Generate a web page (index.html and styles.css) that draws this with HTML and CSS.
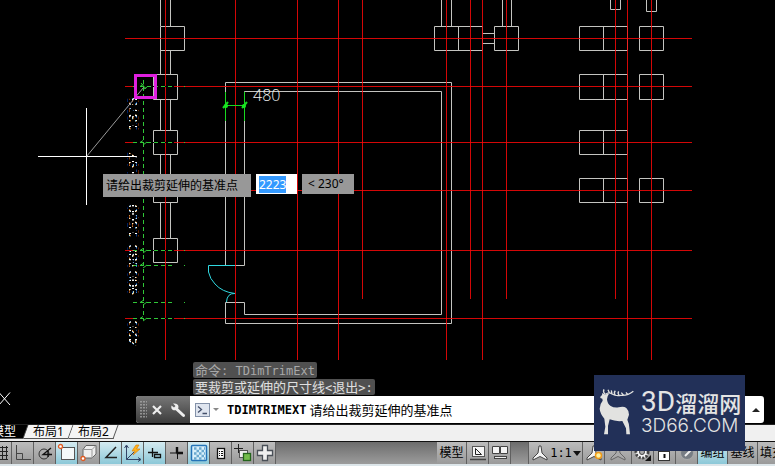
FILE: index.html
```
<!DOCTYPE html>
<html lang="zh-CN">
<head>
<meta charset="utf-8">
<title>TDimTrimExt</title>
<link rel="stylesheet" href="styles.css">
</head>
<body>
<main class="canvas">
  <svg class="drawing" viewBox="0 0 775 424" preserveAspectRatio="xMinYMin slice" role="img" aria-label="平面图">
    <defs>
      <pattern id="dash" width="6" height="6" patternUnits="userSpaceOnUse">
        <rect class="dash-on" width="4" height="2"/>
        <rect class="dash-on" x="2" y="3" width="4" height="2"/>
      </pattern>
    </defs>
    <!-- walls and columns -->
    <g class="wall">
      <path d="M160.500 0V26M170.500 0V26M170.500 50V74M160.500 50V74M160.500 99V130M170.500 99V130M160.500 154V178M170.500 154V178M160.500 202V238M170.500 202V238"/>
      <path d="M160.500 26.500h24v24h-24zM153.500 74.500h24v25h-24zM153.500 130.500h24v24h-24zM153.500 178.500h24v24h-24zM153.500 238.500h24v24h-24z"/>
      <path d="M235 265.500H244.500V91.500H441.500V314.500H244.500V302.500H225.500V323.500H451.500V82.500H225.500V265.500"/>
      <path d="M441.500 0V26M451.500 0V26M502.500 0V26M511.500 0V26M482 33.500H494M482 43.500H494"/>
      <path d="M434.500 26.500h48v24h-48zM458.500 26.500v24M494.500 26.500h24v24h-24z"/>
      <path d="M610.500 0V9.500h10V0M646.500 0V11.500h10V0"/>
      <path d="M579.500 26.500h48v24h-48zM603.500 26.500v24M639.500 26.500h24v24h-24z"/>
      <path d="M579.500 74.500h48v25h-48zM603.500 74.500v25M639.500 74.500h24v25h-24z"/>
      <path d="M579.500 130.500h48v24h-48zM603.500 130.500v24"/>
      <path d="M579.500 178.500h48v24h-48zM603.500 178.500v24M639.500 178.500h24v24h-24z"/>
    </g>
    <!-- axis grid -->
    <path class="axis" d="M125 38.500H692M125 86.500H692M125 142.500H692M125 190.500H692M125 250.500H692M125 318.500H692M165.500 0V360M235.500 0V360M297.500 0V360M338.500 0V360M362.500 0V299M446.500 0V360M470.500 0V299M482.500 0V360M506.500 0V299M615.500 0V299M627.500 0V360M651.500 0V360"/>
    <!-- door -->
    <path class="door" d="M235 265.500H208.500V272Q210 279 215 284Q222 292 235 293.500Q227 293 226.500 302"/>
    <!-- room dimension -->
    <g class="dim">
      <path d="M225.500 92V121M244.500 92V121M226 105.500H244"/>
      <path class="tick" d="M223 108l5-6M242 108l5-6"/>
      <circle cx="226" cy="106" r="2"/><circle cx="244" cy="106" r="2"/>
    </g>
    <text class="dim-text" x="253" y="101">480</text>
    <!-- selected dimension chain -->
    <path class="clear" d="M133 86.500H174M133 142.500H174M133 250.500H174M133 318.500H174"/>
    <path class="chain" d="M133 86.500H174M133 142.500H174M133 250.500H174M133 265.500H174M133 302.500H174M133 318.500H174M143.500 80V320"/>
    <path class="chain-dot" d="M184 86.500h1M184 142.500h1M184 250.500h1M184 265.500h1M184 302.500h1M184 318.500h1"/>
    <path class="chain-tick" d="M140 86.500l4-3M144 89l3-2M141 83l5 6M140 142.500l3-2M143 145l4-3M140 250.500l3-2M143 253l4-3M140 265.500l3-2M143 268l4-3M140 302.500l3-2M143 305l4-3M140 318.500l3-2M143 321l4-3"/>
    <g class="chain-text">
      <text transform="translate(138 114) rotate(-90)">1375</text>
      <text transform="translate(138 168) rotate(-90)">1197</text>
      <text transform="translate(138 221) rotate(-90)">1500</text>
      <text transform="translate(138 257) rotate(-90)">380</text>
      <text transform="translate(138 283) rotate(-90)">900</text>
      <text transform="translate(138 333) rotate(-90)">420</text>
    </g>
    <!-- snap marker and cursor -->
    <path class="rubber" d="M86.500 156.500L143.500 87.500"/>
    <rect class="snap" x="135.500" y="75.500" width="20" height="22"/>
    <path class="cursor" d="M38 156.500H136M86.500 108V205"/>
    <path class="ucs" d="M-1 392.500L10 405M10 392.500L-1 405"/>
  </svg>

  <div class="dyn">
    <label class="dyn-prompt" for="dist">请给出裁剪延伸的基准点</label>
    <input class="dyn-input" id="dist" type="text" value="2223">
    <output class="dyn-angle">&lt; 230°</output>
  </div>

  <section class="cmd">
    <p class="cmd-log old">命令<span class="mono">: TDimTrimExt</span></p>
    <p class="cmd-log">要裁剪或延伸的尺寸线<span class="mono">&lt;</span>退出<span class="mono">&gt;:</span></p>
    <div class="cmd-bar">
      <div class="cmd-grip">
        <svg width="7" height="18" viewBox="0 0 7 18"><path d="M1 0V18M4 0V18M7 0V18" stroke="#aaa" stroke-width="1.500" stroke-dasharray="1.500 1.500"/></svg>
        <button class="cmd-tool" aria-label="关闭"><svg width="10" height="10" viewBox="0 0 10 10"><path d="M1 1L9 9M9 1L1 9" stroke="#eee" stroke-width="2.200"/></svg></button>
        <button class="cmd-tool" aria-label="自定义"><svg width="16" height="16" viewBox="0 0 16 16"><path d="M6 6.500L13.500 13.500" stroke="#eee" stroke-width="3" stroke-linecap="round"/><path d="M3 1.500L5.500 4L4 5.500L1.500 3.500Q.500 7 3.500 8.200Q8 9 8.500 5Q8.500 1 3 1.500z" fill="#eee"/></svg></button>
      </div>
      <button class="cmd-recent" aria-label="最近使用的命令">
        <svg width="24" height="14" viewBox="0 0 24 14"><rect x=".500" y=".500" width="14" height="13" fill="#dfe5ef" stroke="#8391a8"/><path d="M3 3.500L6.500 6.500L3 9.500M7.500 10.500H12" fill="none" stroke="#44506a" stroke-width="1.300"/><path d="M18 5h6l-3 3z" fill="#888"/></svg>
      </button>
      <label class="cmd-line" for="cmd"><b class="mono">TDIMTRIMEXT</b><span>请给出裁剪延伸的基准点</span></label>
      <input class="cmd-input" id="cmd" type="text">
      <button class="cmd-up" aria-label="历史记录"><svg width="8" height="4" viewBox="0 0 8 4"><path d="M0 4L4 0L8 4z" fill="#222"/></svg></button>
    </div>
  </section>
</main>

<nav class="tabs">
  <button class="tab current">模型</button>
  <button class="tab">布局1</button>
  <button class="tab">布局2</button>
</nav>

<footer class="status">
  <button class="st first" aria-label="栅格"><svg viewBox="0 0 20 20"><path d="M3.500 3V17M7.500 3V17M11.500 3V17M15.500 3V17M2 4.500H17M2 8.500H17M2 12.500H17M2 16.500H17" stroke="#222"/></svg></button>
  <button class="st" aria-label="正交"><svg viewBox="0 0 20 20"><path d="M3.500 2V16.500H18M3.500 10.500H9.500V16" stroke="#444"/></svg></button>
  <button class="st" aria-label="极轴"><svg viewBox="0 0 20 20"><circle cx="9" cy="11" r="5" stroke="#333"/><path d="M16 5L8 11.500H17M13 7V14" stroke="#111" stroke-width="1.300"/></svg></button>
  <button class="st on" aria-label="对象捕捉"><svg viewBox="0 0 20 20"><rect x="4.500" y="4.500" width="13" height="12" fill="#f4f8f9" stroke="#555"/><circle cx="3.500" cy="3.500" r="2" fill="#fff" stroke="#e05a20" stroke-width="1.300"/></svg></button>
  <button class="st" aria-label="三维对象捕捉"><svg viewBox="0 0 20 20"><path d="M4 6.500L7 2.500H17V11L13 15H4z" fill="#eee" stroke="#666"/><path d="M4 6.500H13V15M13 6.500L17 2.500" stroke="#999"/><circle cx="4" cy="15.500" r="2" fill="#fff" stroke="#e05a20" stroke-width="1.300"/></svg></button>
  <button class="st on" aria-label="对象追踪"><svg viewBox="0 0 20 20"><path d="M15 4L5 14.500H16" stroke="#222" stroke-width="1.500"/></svg></button>
  <button class="st on" aria-label="动态UCS"><svg viewBox="0 0 20 20"><path d="M3.500 3V16.500H17M3.500 16.500L11 9M1.500 5L3.500 2L5.500 5M15 14.500L18 16.500L15 18.500" stroke="#346"/><path d="M13 2L9 8H12L10 12L17 6H13.500L16 2z" fill="#ffb21c" stroke="#d87800" stroke-width=".600"/></svg></button>
  <button class="st on" aria-label="动态输入"><svg viewBox="0 0 20 20"><path d="M3 9.500H13M7.500 5V14M9.500 11.500H15.500V14.500H9.500z" stroke="#111" stroke-width="1.300"/></svg></button>
  <button class="st" aria-label="线宽"><svg viewBox="0 0 20 20"><path d="M3 10H10" stroke="#111"/><path d="M9.500 10H16M10 4V10" stroke="#111" stroke-width="2.400"/><path d="M10.500 10V16" stroke="#111"/></svg></button>
  <button class="st on" aria-label="透明度"><svg viewBox="0 0 20 20"><rect x="2.500" y="2.500" width="15" height="15" rx="1" fill="#d9f0fb" stroke="#2474b8" stroke-width="1.500"/><path d="M5 5.500H16M7.500 8H16M5 10.500H16M7.500 13H16M5 15.500H16" stroke="#6ba9cf" stroke-width="2.500" stroke-dasharray="2.500 2.500"/></svg></button>
  <button class="st" aria-label="快捷特性"><svg viewBox="0 0 20 20"><rect x="6.500" y="5.500" width="7" height="10" fill="#fff" stroke="#111" stroke-width="1.300"/><path d="M8 8.500H12M8 10.500H12M8 12.500H12" stroke="#111" stroke-dasharray="1 1 2 0"/></svg></button>
  <button class="st" aria-label="选择循环"><svg viewBox="0 0 20 20"><path d="M1 5.500H10M5.500 1V10" stroke="#222"/><rect x="6.500" y="7.500" width="8" height="7" fill="#eee" stroke="#555"/><rect x="10.500" y="10.500" width="7" height="7" fill="#74bc4c" stroke="#23651b" stroke-width="1.300"/></svg></button>
  <button class="st" aria-label="注释监视器"><svg viewBox="0 0 20 20"><path d="M7.500 2.500H12.500V7.500H17.500V12.500H12.500V17.500H7.500V12.500H2.500V7.500H7.500z" fill="#f0f0f0" stroke="#4a5058" stroke-width="1.300"/></svg></button>
  <span class="st-fill"></span>
  <button class="st text">模型</button>
  <button class="st" aria-label="布局"><svg viewBox="0 0 20 20"><rect x="4.500" y="3.500" width="12" height="10" fill="#f4f4f4" stroke="#555"/><path d="M7.500 5.500V11.500H13.500z" stroke="#222"/><path d="M2 16.500H18" stroke="#444" stroke-width="1.500"/></svg></button>
  <button class="st" aria-label="快速查看"><svg viewBox="0 0 20 20"><path d="M2.500 3.500H9.500V10.500H2.500zM10.500 3.500H17.500V10.500H10.500z" fill="#f4f4f4" stroke="#444"/><rect x="4.500" y="13.500" width="12" height="2" fill="#eee" stroke="#444"/></svg></button>
  <span class="st-gap"></span>
  <button class="st scale"><svg viewBox="0 0 20 20"><path d="M9 3H11L12 10L17 15V17L10 13.500L3 17V15L8 10z" fill="#f4f4f4" stroke="#444"/></svg><span class="mono">1:1</span><svg class="caret" viewBox="0 0 8 5"><path d="M0 0H8L4 5z" fill="#111"/></svg></button>
  <button class="st" aria-label="注释可见性"><svg viewBox="0 0 20 20"><path d="M9 3H11L12 10L17 15V17L10 13.500L3 17V15L8 10z" fill="#f4f4f4" stroke="#444"/><circle cx="14.500" cy="12.500" r="3" fill="#fff2a0" stroke="#f09a18" stroke-width="1.500"/></svg></button>
  <button class="st wide" aria-label="自动添加比例"><svg viewBox="0 0 20 20"><path d="M9 3H11L12 10L17 15V17L10 13.500L3 17V15L8 10z" fill="#aaa" stroke="#666"/></svg></button>
  <button class="st" aria-label="切换工作空间"><svg viewBox="0 0 20 20"><circle cx="9" cy="9" r="6" fill="#f4f4f4" stroke="#444" stroke-width="3" stroke-dasharray="2 1.500"/><circle cx="9" cy="9" r="4.500" fill="#f4f4f4"/><circle cx="9" cy="9" r="2.500" fill="#aaa" stroke="#444"/><path d="M12 18H18V12z" fill="#111"/></svg></button>
  <button class="st" aria-label="锁定"><svg viewBox="0 0 20 20"><path d="M6 9V4H12V9" stroke="#333" stroke-width="1.500"/><rect x="3.500" y="8.500" width="11" height="9" fill="#fff" stroke="#333"/><path d="M9.500 11V15" stroke="#111" stroke-width="2"/></svg></button>
  <button class="st" aria-label="隔离对象"><svg viewBox="0 0 20 20"><circle cx="10" cy="10" r="6.500" fill="#777d84" stroke="#aaa"/><path d="M8 13L15 6" stroke="#eee" stroke-width="2"/></svg></button>
  <button class="st text on">编组</button>
  <button class="st text">基线</button>
  <button class="st text last">填充</button>
</footer>

<aside class="brand">
  <svg class="deer" viewBox="27 27 108 144" aria-hidden="true">
    <path d="M31 50L36 45L37 39L43 43H49L57 41L53 49L51 58Q52 72 62 78Q72 84 86 82Q101 78 109 84Q117 92 117 104L112 119Q118 132 118 144L120 163H109L108 145L97 123Q76 125 59 118L54 138V163H42L46 140L43 116Q30 100 29 86Q29 72 38 62L37 56L31 54z" fill="#e2e2e0"/>
    <path d="M47 43Q56 35 66 42Q78 49 92 46Q113 48 130 34M45 42Q38 36 42 28M58 38L54 29M66 42L64 31M76 46Q70 38 76 32M88 47Q82 40 86 34M101 46L94 38M113 44L108 37" fill="none" stroke="#e2e2e0" stroke-width="4"/>
  </svg>
  <div class="brand-name">
    <span class="brand-cn"><b>3D</b>溜溜网</span>
    <span class="brand-url">3D66.COM</span>
  </div>
</aside>
<script src="app.js"></script>
</body>
</html>
```
FILE: styles.css
```
* { box-sizing: border-box; }
html, body { height: 100%; margin: 0; }
body {
  display: flex;
  flex-direction: column;
  position: relative;
  overflow: hidden;
  background: #000;
  font: 12px/14px "Noto Sans", "Noto Sans CJK SC", sans-serif;
  color: #000;
}
button, input {
  margin: 0;
  padding: 0;
  border: 0;
  border-radius: 0;
  background: none;
  font: inherit;
  color: inherit;
}
.mono { font-family: "DejaVu Sans Mono", monospace; font-size: 12px; white-space: pre; }

/* drawing area */
.canvas { position: relative; flex: 1; min-height: 0; overflow: hidden; }
.drawing { display: block; width: 100%; height: 100%; }
.drawing path, .drawing rect { fill: none; }
.drawing .dash-on { fill: #fff; }
.wall { stroke: #c4c4c0; }
.axis { stroke: #f80808; stroke-opacity: .85; }
.door { stroke: #30d8e0; }
.dim path { stroke: #18d820; }
.dim .tick { stroke-width: 2; }
.dim circle { fill: #18e820; }
.dim-text { fill: #f0f0f0; font: 300 16px "Open Sans", "Liberation Sans", sans-serif; }
.clear { stroke: #000; }
.chain { stroke: #30c838; stroke-dasharray: 4 3; }
.chain-dot, .chain-tick { stroke: #30c838; }
.chain-text text {
  fill: url(#dash);
  text-anchor: middle;
  font: 15px "Liberation Sans", sans-serif;
}
.rubber { stroke: #9a9a9a; }
.drawing .snap { stroke: #e020e0; stroke-width: 3; }
.cursor, .ucs { stroke: #fff; }

/* dynamic input */
.dyn { position: absolute; left: 103px; top: 174px; display: flex; align-items: flex-start; }
.dyn-prompt { width: 148px; padding: 3px; background: #989898; line-height: 17px; white-space: nowrap; }
.dyn-input { width: 41px; height: 20px; margin: 0 5px; padding: 0 3px; background: #fff; outline: 0; }
.dyn-input::selection { background: #3399ff; color: #fff; }
.dyn-angle { width: 52px; padding: 0 6px; background: #989898; line-height: 20px; }

/* command window */
.cmd { position: absolute; left: 136px; right: 11px; bottom: 1px; display: flex; flex-direction: column; align-items: flex-start; }
.cmd-log {
  margin: 0 0 1px 57px;
  padding: 0 2px;
  border-radius: 2px;
  background: #505050;
  color: #e0e0e0;
  font: 13px/15px "Noto Sans CJK SC", sans-serif;
}
.cmd-log .mono { line-height: 14px; }
.cmd-log.old { color: #a8a8a8; }
.cmd-bar { display: flex; align-items: center; width: 100%; height: 27px; border-radius: 3px; background: #fff; overflow: hidden; }
.cmd-grip {
  display: flex;
  align-items: center;
  gap: 5px;
  height: 100%;
  width: 54px;
  padding-left: 4px;
  background: linear-gradient(#777, #3c3c3c);
}
.cmd-tool { display: flex; padding-right: 3px; }
.cmd-recent { display: flex; margin: 0 8px 0 5px; }
.cmd-line { display: flex; align-items: center; gap: 3px; font: 13px/20px "Noto Sans CJK SC", sans-serif; white-space: nowrap; }
.cmd-input { flex: 1; min-width: 0; height: 20px; outline: 0; }
.cmd-up { display: flex; padding: 8px; margin-right: -4px; }

/* layout tabs */
.tabs { display: flex; height: 18px; border-top: 1px solid #222; border-bottom: 1px solid #111; background: #f0f0f0; }
.tab { position: relative; z-index: 0; width: 45px; height: 14px; line-height: 14px; text-align: center; white-space: nowrap; }
.tab::before {
  content: "";
  position: absolute;
  z-index: -1;
  inset: 0;
  border: solid #555;
  border-width: 0 1px 1px 0;
  background: #f4f4f4;
  transform: skewX(-20deg);
}
.tab.current { width: 26px; color: #fff; display: flex; justify-content: flex-end; padding-right: 10px; }
.tab.current::before { left: -10px; background: #000; }

/* status bar */
.status { display: flex; height: 24px; border-bottom: 2px solid #dde6ea; background: linear-gradient(#6c6c6c, #9c9c9c); overflow: hidden; }
.st {
  display: flex;
  flex: none;
  align-items: center;
  justify-content: center;
  width: 22px;
  height: 22px;
  border-right: 1px solid #606060;
  background: linear-gradient(#bcbcbc, #9a9a9a);
}
.st svg { width: 20px; height: 20px; fill: none; }
.st.first { margin-left: -10px; }
.st.on { background: linear-gradient(#d4eaf0, #8cc8d8); }
.st.text { width: 30px; }
.st.wide { width: 27px; }
.st.scale { width: 55px; border-left: 1px solid #606060; }
.st.scale .caret { width: 8px; height: 5px; margin-left: 1px; }
.st.last { width: 17px; justify-content: flex-start; padding-left: 2px; overflow: hidden; white-space: nowrap; border: 0; }
.st-fill { flex: 1; }
.st-gap { width: 17px; }

/* brand plate */
.brand {
  position: absolute;
  right: 30px;
  bottom: 15px;
  display: flex;
  align-items: center;
  gap: 6px;
  width: 151px;
  height: 76px;
  padding-left: 5px;
  background: #223058;
  color: #e4e4e4;
}
.deer { width: 36px; height: 48px; }
.brand-name { display: flex; flex-direction: column; }
.brand-cn { display: flex; align-items: center; height: 26px; font: 500 22px/26px "Noto Sans CJK SC", sans-serif; }
.brand-cn b { font: 400 28px/26px Roboto, sans-serif; }
.brand-url { font: 300 19px/22px Inter, sans-serif; }
```
FILE: app.js
```
const dist = document.getElementById("dist");
dist.focus();
dist.select();
```
